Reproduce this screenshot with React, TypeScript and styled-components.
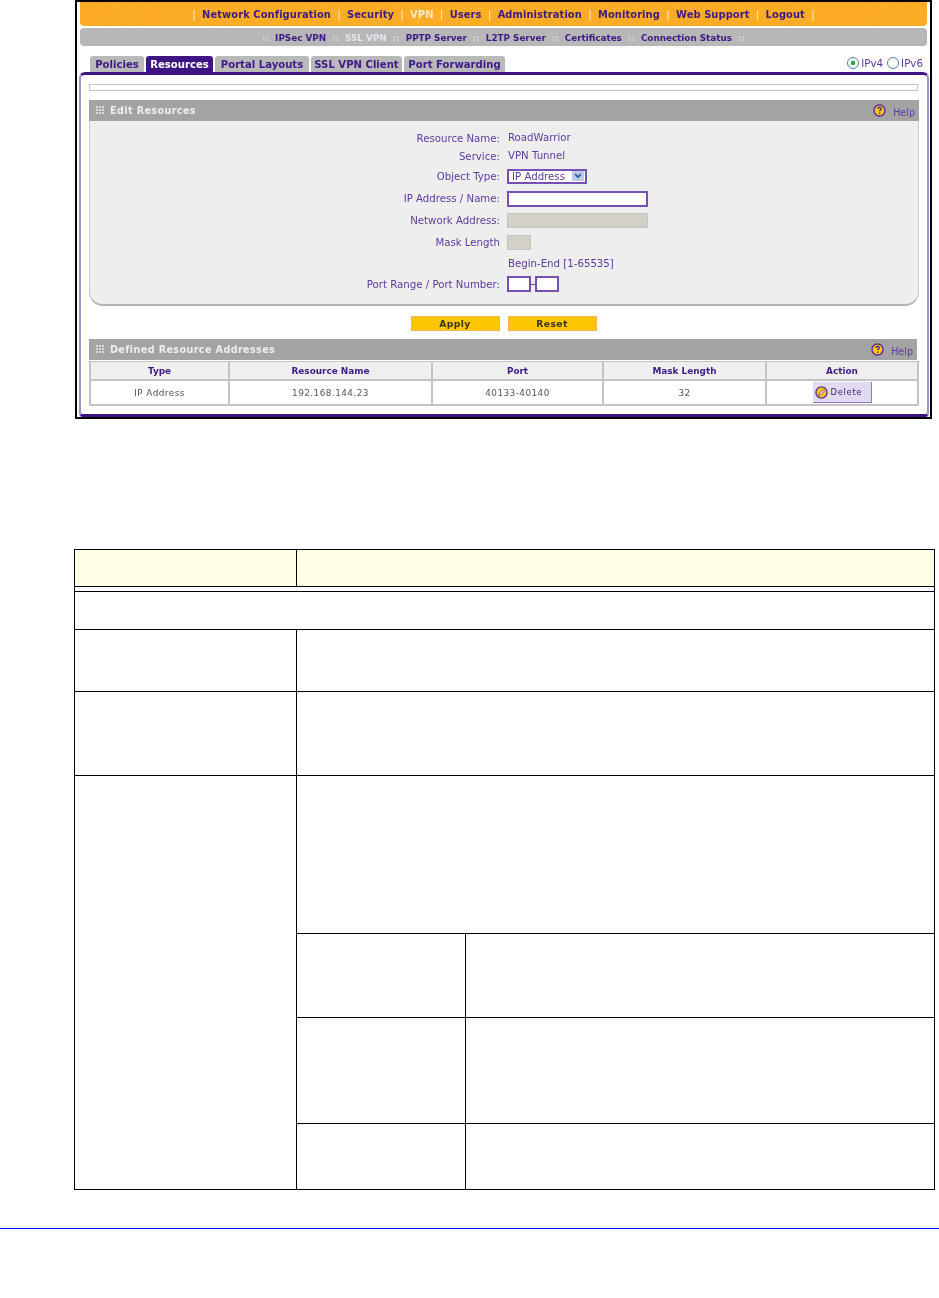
import React from "react";
import styled, { createGlobalStyle } from "styled-components";

const Global = createGlobalStyle`
  html, body { margin: 0; padding: 0; background: #fff; }
  body { font-family: "DejaVu Sans", Verdana, sans-serif; }
`;

const Page = styled.div`
  width: 939px;
  height: 1298px;
  overflow: hidden;
  background: #fff;
`;
const Frame = styled.div`
  box-sizing: border-box;
  width: 857px;
  height: 419px;
  margin-left: 75px;
  border: 2px solid #000;
  background: #fff;
  padding: 0 3px;
  display: flex;
  flex-direction: column;
  filter: blur(0.45px);
`;
const TopNav = styled.div`
  height: 24px;
  width: 847px;
  border-radius: 0 0 4px 4px;
  background: repeating-linear-gradient(135deg, #fba71c 0 1px, #fdae2a 1px 3px);
  display: flex;
  align-items: center;
  justify-content: center;
  gap: 6.25px;
  font-size: 9.9px;
  font-weight: 700;
  color: #3d1a86;
`;
const Sep = styled.span`
  color: #fde3b0;
  font-weight: 700;
`;
const NavLink = styled.span<{ $on?: boolean }>`
  color: ${(p) => (p.$on ? "#fde9c8" : "#3d1a86")};
  letter-spacing: 0.1px;
`;
const SubNav = styled.div`
  box-sizing: border-box;
  height: 18px;
  width: 847px;
  margin-top: 2px;
  padding-top: 1px;
  border-radius: 4px;
  background: #b7b7b7;
  display: flex;
  align-items: center;
  justify-content: center;
  gap: 5px;
  font-size: 8.8px;
  font-weight: 700;
  color: #3d1a86;
`;
const SubSep = styled.span`
  color: #d8d8d8;
  margin: 0 1px;
`;
const SubLink = styled.span<{ $on?: boolean }>`
  color: ${(p) => (p.$on ? "#e6e3ee" : "#3d1a86")};
`;
const TabRow = styled.div`
  height: 16px;
  margin-top: 10px;
  padding: 0 2px 0 10px;
  width: 835px;
  display: flex;
  align-items: flex-end;
  gap: 2px;
`;
const Tab = styled.div<{ $on?: boolean; $w: number }>`
  box-sizing: border-box;
  height: 16px;
  width: ${(p) => p.$w}px;
  border-radius: 3px 3px 0 0;
  background: ${(p) => (p.$on ? "#3f1584" : "#b9b9b9")};
  color: ${(p) => (p.$on ? "#fff" : "#3d1a86")};
  font-size: 10.1px;
  font-weight: 700;
  text-align: center;
  line-height: 17px;
  white-space: nowrap;
`;
const RadioGroup = styled.div`
  margin-left: auto;
  display: flex;
  align-items: center;
  gap: 2px;
  font-size: 10.3px;
  color: #5d3a9e;
  height: 16px;
  padding-bottom: 2px;
  box-sizing: border-box;
`;
const Radio = styled.span<{ $on?: boolean }>`
  box-sizing: border-box;
  width: 12px;
  height: 12px;
  border-radius: 50%;
  border: 1px solid #4d7f9d;
  background: ${(p) =>
    p.$on ? "radial-gradient(circle, #2ea83a 0 2px, #fff 2.6px)" : "#fff"};
`;
const RadioLabel = styled.span`
  margin-right: 2px;
`;
const Panel = styled.div`
  box-sizing: border-box;
  width: 850px;
  height: 345px;
  margin-left: -1px;
  border: 2px solid #a68fcb;
  border-top: 3px solid #3f1584;
  border-bottom: 3px solid #3f1584;
  border-radius: 6px 6px 4px 4px;
  padding: 9px 7px 0 8px;
  display: flex;
  flex-direction: column;
`;
const ThinBox = styled.div`
  box-sizing: border-box;
  height: 7px;
  width: 829px;
  border: 1px solid #c4c4c4;
  background: #fff;
`;
const SectionHead = styled.div<{ $w: number; $mt: number }>`
  box-sizing: border-box;
  height: 21px;
  width: ${(p) => p.$w}px;
  margin-top: ${(p) => p.$mt}px;
  background: #a3a3a3;
  display: flex;
  align-items: center;
  padding: 0 4px 0 7px;
  gap: 5px;
  color: #eeeeee;
  font-size: 9.6px;
  font-weight: 700;
  letter-spacing: 0.4px;
`;
const HelpWrap = styled.div`
  margin-left: auto;
  display: flex;
  align-items: center;
  gap: 7px;
  color: #5b3a9c;
  font-weight: 400;
  letter-spacing: 0;
  font-size: 9.6px;
`;
const HelpText = styled.span`
  padding-top: 3px;
`;
const FormBody = styled.div`
  box-sizing: border-box;
  width: 830px;
  height: 185px;
  background: #eeeeee;
  border: 1px solid #c9c9c9;
  border-top: 0;
  border-bottom: 2px solid #b5b5b5;
  border-radius: 0 0 14px 14px;
  padding-top: 8px;
  display: flex;
  flex-direction: column;
`;
const FormRow = styled.div<{ $h: number }>`
  height: ${(p) => p.$h}px;
  display: grid;
  grid-template-columns: 410px 1fr;
  column-gap: 7px;
  align-items: center;
  font-size: 10.2px;
  color: #5d3a9e;
`;
const Label = styled.div`
  text-align: right;
  white-space: nowrap;
`;
const Value = styled.div`
  display: flex;
  align-items: center;
  white-space: nowrap;
`;
const ValueText = styled.span`
  padding: 0 0 1px 1px;
`;
const SelectBox = styled.div`
  box-sizing: border-box;
  width: 80px;
  height: 15px;
  border: 2px solid #7650b5;
  background: #fff;
  display: flex;
  align-items: center;
  justify-content: space-between;
  padding: 0 1px 0 3px;
  font-size: 10.2px;
`;
const SelectArrow = styled.span`
  width: 12px;
  height: 10px;
  background: #b9cdea;
  display: flex;
  align-items: center;
  justify-content: center;
`;
const TextField = styled.div<{ $w: number; $off?: boolean }>`
  box-sizing: border-box;
  width: ${(p) => p.$w}px;
  height: ${(p) => (p.$off ? 15 : 16)}px;
  border: ${(p) => (p.$off ? "1px solid #c6c3bb" : "2px solid #7650b5")};
  background: ${(p) => (p.$off ? "#d3d0c8" : "#fff")};
`;
const Dash = styled.span`
  width: 4px;
  height: 1px;
  background: #6c45ad;
`;
const ButtonRow = styled.div`
  margin-top: 10px;
  padding-right: 2px;
  display: flex;
  justify-content: center;
  gap: 8px;
`;
const YellowButton = styled.div`
  box-sizing: border-box;
  width: 89px;
  height: 15px;
  background: #fdc700;
  border: 1px solid #f8b35a;
  color: #3a3320;
  font-size: 9.2px;
  font-weight: 700;
  letter-spacing: 0.4px;
  text-align: center;
  line-height: 14px;
`;
const DataTable = styled.table`
  border-collapse: collapse;
  table-layout: fixed;
  width: 828px;
  margin-top: 1px;
  font-size: 8.9px;
`;
const HeadCell = styled.th`
  height: 17px;
  padding: 0;
  box-sizing: content-box;
  background: #efefef;
  border: 1px solid #c4c4c4;
  border-width: 1px 2px;
  color: #3d1a86;
  font-weight: 700;
`;
const DataCell = styled.td`
  height: 23px;
  padding: 0;
  background: #fff;
  border: 2px solid #c4c4c4;
  color: #555;
  text-align: center;
  letter-spacing: 0.45px;
`;
const DeleteButton = styled.div`
  box-sizing: border-box;
  width: 59px;
  height: 21px;
  margin: 0 auto;
  background: #e2daf0;
  border-right: 1.5px solid #8f78bd;
  border-bottom: 1.5px solid #8f78bd;
  display: flex;
  align-items: center;
  gap: 3px;
  padding-left: 2px;
  color: #3d1a86;
  font-size: 8.4px;
  letter-spacing: 0.7px;
`;
const DocTable = styled.table`
  border-collapse: collapse;
  table-layout: fixed;
  width: 860px;
  margin: 130px 0 0 74px;
`;
const DocRow = styled.tr<{ $h: number }>`
  height: ${(p) => p.$h}px;
`;
const DocCell = styled.td<{ $head?: boolean }>`
  padding: 0;
  border: 1px solid #000;
  background: ${(p) => (p.$head ? "#ffffe5" : "#fff")};
`;
const FooterRule = styled.div`
  height: 1px;
  margin-top: 38px;
  background: #0000ff;
`;

const GridDots = () => (
  <svg width="9" height="9" viewBox="0 0 9 9" fill="#dcdcdc">
    {[0, 3, 6].flatMap((y) =>
      [0, 3, 6].map((x) => <rect key={`${x}-${y}`} x={x} y={y} width="2" height="2" />)
    )}
  </svg>
);
const HelpIcon = () => (
  <svg width="13" height="13" viewBox="0 0 13 13">
    <circle cx="6.5" cy="6.5" r="5.5" fill="#f5c518" stroke="#5b2d91" strokeWidth="1.4" />
    <path d="M4.8 5c.2-1.1 1-1.6 1.8-1.6 1 0 1.7.6 1.7 1.4 0 1.2-1.7 1.2-1.7 2.5" fill="none" stroke="#3d1a86" strokeWidth="1.2" />
    <rect x="6" y="8.6" width="1.3" height="1.3" fill="#3d1a86" />
  </svg>
);
const DeleteIcon = () => (
  <svg width="13" height="13" viewBox="0 0 13 13">
    <circle cx="6.5" cy="6.5" r="5.6" fill="#f5c518" stroke="#5b2d91" strokeWidth="1.3" />
    <path d="M3.6 9.4 4.2 7.4 8.2 3.4 9.6 4.8 5.6 8.8Z" fill="#fff4c0" stroke="#5b2d91" strokeWidth="0.8" />
  </svg>
);

const navItems = ["Network Configuration", "Security", "VPN", "Users", "Administration", "Monitoring", "Web Support", "Logout"];
const subItems = ["IPSec VPN", "SSL VPN", "PPTP Server", "L2TP Server", "Certificates", "Connection Status"];
const tabs: [string, number][] = [["Policies", 54], ["Resources", 67], ["Portal Layouts", 94], ["SSL VPN Client", 91], ["Port Forwarding", 101]];

export default function App() {
  return (
    <Page>
      <Global />
      <Frame>
        <TopNav>
          <Sep>|</Sep>
          {navItems.map((n) => (
            <React.Fragment key={n}>
              <NavLink $on={n === "VPN"}>{n}</NavLink>
              <Sep>|</Sep>
            </React.Fragment>
          ))}
        </TopNav>
        <SubNav>
          <SubSep>::</SubSep>
          {subItems.map((n) => (
            <React.Fragment key={n}>
              <SubLink $on={n === "SSL VPN"}>{n}</SubLink>
              <SubSep>::</SubSep>
            </React.Fragment>
          ))}
        </SubNav>
        <TabRow>
          {tabs.map(([t, w]) => (
            <Tab key={t} $w={w} $on={t === "Resources"}>{t}</Tab>
          ))}
          <RadioGroup>
            <Radio $on />
            <RadioLabel>IPv4</RadioLabel>
            <Radio />
            <RadioLabel>IPv6</RadioLabel>
          </RadioGroup>
        </TabRow>
        <Panel>
          <ThinBox />
          <SectionHead $w={830} $mt={9}>
            <GridDots />
            Edit Resources
            <HelpWrap>
              <HelpIcon />
              <HelpText>Help</HelpText>
            </HelpWrap>
          </SectionHead>
          <FormBody>
            <FormRow $h={18}><Label>Resource Name:</Label><Value><ValueText>RoadWarrior</ValueText></Value></FormRow>
            <FormRow $h={18}><Label>Service:</Label><Value><ValueText>VPN Tunnel</ValueText></Value></FormRow>
            <FormRow $h={22}>
              <Label>Object Type:</Label>
              <Value>
                <SelectBox>
                  IP Address
                  <SelectArrow>
                    <svg width="8" height="6" viewBox="0 0 8 6">
                      <path d="M1 1 4 4 7 1" fill="none" stroke="#2d4f8e" strokeWidth="1.6" />
                    </svg>
                  </SelectArrow>
                </SelectBox>
              </Value>
            </FormRow>
            <FormRow $h={23}><Label>IP Address / Name:</Label><Value><TextField $w={141} /></Value></FormRow>
            <FormRow $h={21}><Label>Network Address:</Label><Value><TextField $w={141} $off /></Value></FormRow>
            <FormRow $h={23}><Label>Mask Length</Label><Value><TextField $w={24} $off /></Value></FormRow>
            <FormRow $h={20}><Label /><Value><ValueText>Begin-End [1-65535]</ValueText></Value></FormRow>
            <FormRow $h={20}>
              <Label>Port Range / Port Number:</Label>
              <Value>
                <TextField $w={24} />
                <Dash />
                <TextField $w={24} />
              </Value>
            </FormRow>
          </FormBody>
          <ButtonRow>
            <YellowButton>Apply</YellowButton>
            <YellowButton>Reset</YellowButton>
          </ButtonRow>
          <SectionHead $w={828} $mt={8}>
            <GridDots />
            Defined Resource Addresses
            <HelpWrap>
              <HelpIcon />
              <HelpText>Help</HelpText>
            </HelpWrap>
          </SectionHead>
          <DataTable>
            <colgroup>
              <col width={139} />
              <col width={203} />
              <col width={171} />
              <col width={163} />
              <col width={152} />
            </colgroup>
            <thead>
              <tr>
                <HeadCell>Type</HeadCell>
                <HeadCell>Resource Name</HeadCell>
                <HeadCell>Port</HeadCell>
                <HeadCell>Mask Length</HeadCell>
                <HeadCell>Action</HeadCell>
              </tr>
            </thead>
            <tbody>
              <tr>
                <DataCell>IP Address</DataCell>
                <DataCell>192.168.144.23</DataCell>
                <DataCell>40133-40140</DataCell>
                <DataCell>32</DataCell>
                <DataCell>
                  <DeleteButton>
                    <DeleteIcon />
                    Delete
                  </DeleteButton>
                </DataCell>
              </tr>
            </tbody>
          </DataTable>
        </Panel>
      </Frame>
      <DocTable>
        <colgroup>
          <col width={222} />
          <col width={169} />
          <col width={469} />
        </colgroup>
        <tbody>
          <DocRow $h={37}>
            <DocCell $head />
            <DocCell $head colSpan={2} />
          </DocRow>
          <DocRow $h={5}><DocCell colSpan={3} /></DocRow>
          <DocRow $h={38}><DocCell colSpan={3} /></DocRow>
          <DocRow $h={62}><DocCell /><DocCell colSpan={2} /></DocRow>
          <DocRow $h={84}><DocCell /><DocCell colSpan={2} /></DocRow>
          <DocRow $h={158}><DocCell rowSpan={4} /><DocCell colSpan={2} /></DocRow>
          <DocRow $h={84}><DocCell /><DocCell /></DocRow>
          <DocRow $h={106}><DocCell /><DocCell /></DocRow>
          <DocRow $h={66}><DocCell /><DocCell /></DocRow>
        </tbody>
      </DocTable>
      <FooterRule />
    </Page>
  );
}
